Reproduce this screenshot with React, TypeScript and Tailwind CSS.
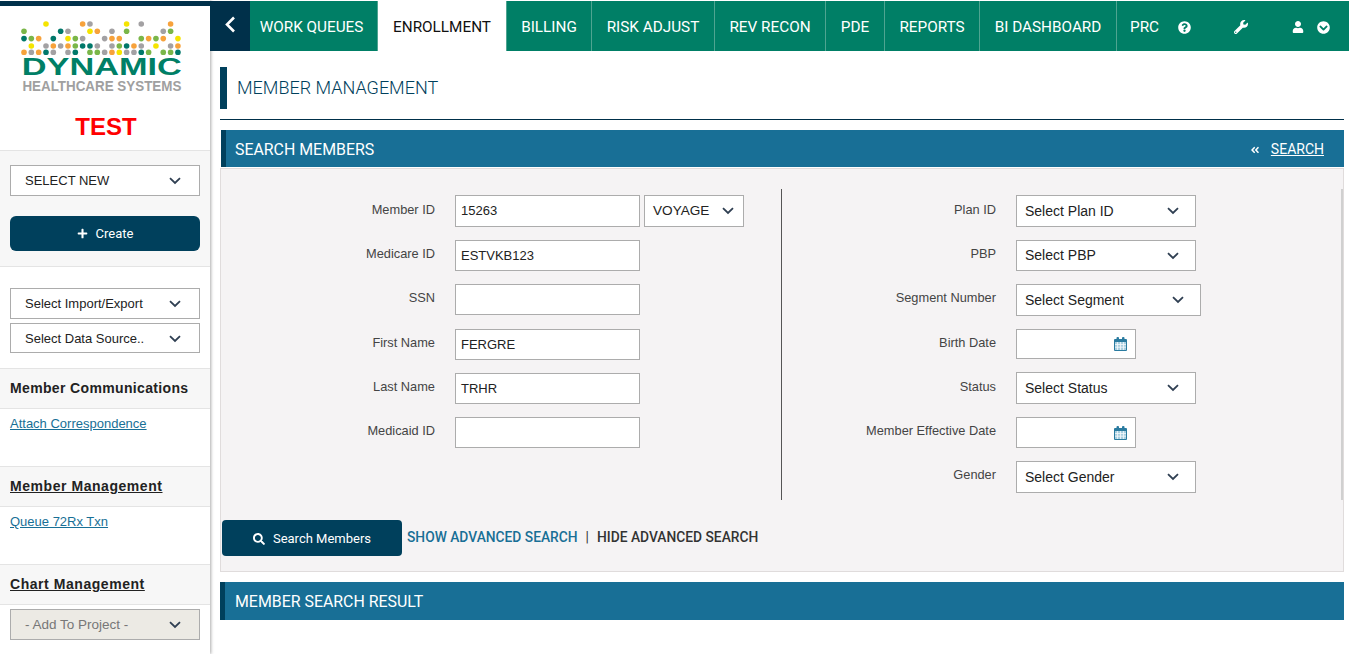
import { FaAngleDoubleLeft, FaChevronCircleDown, FaPlus, FaQuestionCircle, FaSearch, FaUser, FaWrench } from "react-icons/fa";

const D = "#00786a";
const L = "#7ab648";
const O = "#f7a23b";
const Y = "#f5e400";
const A = "#a3a1a3";

// [column, colour] per row of the logo's dot field
const dotRows: [number, string][][] = [
  [[3, Y], [8, O], [9, A], [14, Y], [16, A], [20, O]],
  [[0, L], [5, D], [6, A], [9, Y], [10, O], [12, A], [14, L], [19, A], [20, L]],
  [[0, D], [1, L], [2, O], [4, D], [6, Y], [7, L], [8, A], [11, A], [12, O], [13, O], [16, L], [17, O], [18, L], [19, O], [21, Y]],
  [[1, Y], [3, A], [4, O], [5, A], [6, O], [7, L], [8, D], [9, D], [10, A], [12, A], [13, L], [14, D], [15, O], [16, A], [18, Y], [20, A], [21, O]],
  [[0, O], [1, A], [2, O], [3, D], [4, A], [6, A], [7, D], [9, L], [10, L], [11, A], [12, O], [13, Y], [14, A], [15, A], [16, D], [17, L], [19, L], [20, L], [21, D]],
];
const dotY = [0, 7.3, 14.6, 22, 28.4];

const tabs = [
  { label: "WORK QUEUES", w: "w-[128px] pr-[4px]" },
  { label: "ENROLLMENT", w: "w-[129px]", active: true },
  { label: "BILLING", w: "w-[85px]" },
  { label: "RISK ADJUST", w: "w-[123px]" },
  { label: "REV RECON", w: "w-[111px]" },
  { label: "PDE", w: "w-[59px]" },
  { label: "REPORTS", w: "w-[95px]" },
  { label: "BI DASHBOARD", w: "w-[137px]" },
];

function Chevron() {
  return (
    <svg width="12" height="8" viewBox="0 0 12 8" fill="none" className="shrink-0">
      <path d="M1 1.2 6 6l5-4.8" stroke="#2f3f52" strokeWidth="1.8" />
    </svg>
  );
}

function CalendarIcon() {
  return (
    <svg width="13" height="14" viewBox="0 0 13 14">
      <rect x="0" y="2" width="13" height="12" rx="1" fill="#2a7ba0" />
      <rect x="2.5" y="0" width="2.5" height="4" rx="1" fill="#2a7ba0" />
      <rect x="8" y="0" width="2.5" height="4" rx="1" fill="#2a7ba0" />
      <rect x="1" y="5" width="11" height="8" fill="#a9cfe0" />
      <path d="M3.5 5v8M6.5 5v8M9.5 5v8M1 7.5h11M1 10.2h11" stroke="#f5f9fb" strokeWidth="0.8" />
    </svg>
  );
}

function Select({ label, className, muted }: { label: string; className: string; muted?: boolean }) {
  return (
    <div
      className={`flex items-center justify-between border border-[#acacac] pl-[14px] pr-[18px] ${muted ? "bg-[#eceae4] pt-px text-[13.5px] text-[#777]" : "bg-white text-[13px] text-[#222]"} ${className}`}
    >
      <span className="whitespace-nowrap">{label}</span>
      <Chevron />
    </div>
  );
}

function FormSelect({ label, className }: { label: string; className: string }) {
  return (
    <div className={`flex items-center justify-between border border-[#acacac] bg-white pl-2 pr-4 text-[14px] text-[#222] ${className}`}>
      <span className="whitespace-nowrap">{label}</span>
      <Chevron />
    </div>
  );
}

function TextBox({ value }: { value?: string }) {
  return (
    <div className="flex h-full w-[185px] items-center border border-[#acacac] bg-white px-[5px] text-[13px] text-[#222]">
      {value}
    </div>
  );
}

function DateBox({ height }: { height: string }) {
  return (
    <div className={`flex ${height} w-[120px] items-center justify-end border border-[#acacac] bg-white pr-[8px]`}>
      <CalendarIcon />
    </div>
  );
}

function LeftRow({ label, height, gap, pad, children }: { label: string; height: string; gap: string; pad: string; children: React.ReactNode }) {
  return (
    <div className={`flex ${height} ${gap}`}>
      <div className={`w-[214px] text-right text-[12.8px] text-[#444] ${pad}`}>{label}</div>
      <div className="ml-[20px] flex h-full gap-1">{children}</div>
    </div>
  );
}

function RightRow({ label, gap, pad, children }: { label: string; gap: string; pad: string; children: React.ReactNode }) {
  return (
    <div className={`flex ${gap}`}>
      <div className={`w-[214px] whitespace-nowrap text-right text-[12.8px] text-[#444] ${pad}`}>{label}</div>
      <div className="ml-[20px]">{children}</div>
    </div>
  );
}

function SectionBar({ title, titleClass, children }: { title: string; titleClass?: string; children?: React.ReactNode }) {
  return (
    <div className="flex items-center justify-between border-l-[5px] border-[#00405c] bg-[#186f96] pl-[9px] pr-5 pt-[2px] font-['Roboto',sans-serif] text-[15.9px] text-white">
      <span className={titleClass}>{title}</span>
      {children}
    </div>
  );
}

function SideHeading({ title, underline }: { title: string; underline?: boolean }) {
  return (
    <div className={`flex h-[41px] items-center border-y border-[#e4e4e4] bg-[#f7f7f7] pl-[10px] text-[14px] font-bold text-[#222] ${underline ? "tracking-[0.55px] underline" : "tracking-[0.35px]"}`}>
      {title}
    </div>
  );
}

export default function App() {
  return (
    <div className="flex h-[654px] w-[1366px] overflow-hidden bg-white font-['Liberation_Sans',sans-serif]">
      <aside className="flex w-[210px] shrink-0 flex-col shadow-[1px_0_3px_#aaa]">
        <div className="mt-px h-[5px] bg-[#00304a]" />
        <div className="flex h-[144px] flex-col items-center bg-white">
          <svg width="168" height="34" viewBox="0 0 168 34" className="mt-[15px] shrink-0">
            {dotRows.map((row, r) =>
              row.map(([c, color]) => (
                <circle key={`${r}-${c}`} cx={3 + c * 7.33} cy={3 + dotY[r]} r="2.8" fill={color} />
              ))
            )}
          </svg>
          <div className="mt-[4px] h-[17px] whitespace-nowrap text-[23.5px] font-bold leading-[17px] text-[#007f66] [transform:translateX(-3px)_scaleX(1.46)]">
            DYNAMIC
          </div>
          <div className="mt-[4px] h-[12px] whitespace-nowrap text-[15.4px] font-bold leading-[12px] text-[#a0a0a0] [transform:translateX(-3.5px)_scaleX(0.87)]">
            HEALTHCARE SYSTEMS
          </div>
          <div className="ml-[2px] mt-[21px] text-[24px] font-bold leading-[28px] text-[#ff0000]">TEST</div>
        </div>
        <div className="flex h-[117px] flex-col border-y border-[#e4e4e4] bg-[#f7f7f7] px-[10px] pt-[14px]">
          <Select label="SELECT NEW" className="h-[31px]" />
          <div className="mt-5 flex h-[35px] items-center justify-center gap-2 rounded-[6px] bg-[#00405c] font-['Roboto',sans-serif] text-[13px] text-white">
            <FaPlus className="text-[11px]" />
            Create
          </div>
        </div>
        <div className="flex h-[101px] flex-col gap-1 px-[10px] pt-[21px]">
          <Select label="Select Import/Export" className="h-[31px]" />
          <Select label="Select Data Source.." className="h-[30px] pt-px" />
        </div>
        <SideHeading title="Member Communications" />
        <div className="h-[57px] pl-[10px] pt-[5px] text-[13px] text-[#186f96] underline">Attach Correspondence</div>
        <SideHeading title="Member Management" underline />
        <div className="h-[57px] pl-[10px] pt-[5px] text-[13px] text-[#186f96] underline">Queue 72Rx Txn</div>
        <SideHeading title="Chart Management" underline />
        <div className="px-[10px] pt-[4px]">
          <Select label="- Add To Project -" className="h-[31px]" muted />
        </div>
      </aside>

      <div className="w-[1139px] shrink-0">
        <nav className="mt-px flex h-[50px] w-full items-stretch bg-[#007f66] font-['Roboto',sans-serif] text-[15.3px] text-white">
          <div className="flex w-[40px] items-center justify-center bg-[#00304a] pb-[2px]">
            <svg width="12" height="18" viewBox="0 0 12 18" fill="none">
              <path d="M10 1.5 3 8.5l7 7" stroke="white" strokeWidth="2.6" />
            </svg>
          </div>
          {tabs.map((t) => (
            <div
              key={t.label}
              className={`flex ${t.w} items-center justify-center border-r border-[#4fa491] pt-[2px] ${t.active ? "bg-white text-[#111]" : ""}`}
            >
              {t.label}
            </div>
          ))}
          <div className="flex w-[42px] items-center overflow-hidden whitespace-nowrap pl-[13px] pt-[2px]">PRC</div>
          <div className="flex w-[32px] items-center justify-end pt-[2px]">
            <FaQuestionCircle className="text-[13px]" />
          </div>
          <div className="flex w-[57px] items-center justify-end pt-[2px]">
            <FaWrench className="text-[14px]" />
          </div>
          <div className="flex w-[56px] items-center justify-end pt-[2px]">
            <FaUser className="text-[12px]" />
          </div>
          <div className="ml-[13px] flex items-center pt-[2px]">
            <FaChevronCircleDown className="text-[13px]" />
          </div>
        </nav>

        <main className="ml-[10px] w-[1124px]">
          <div className="mt-4 flex h-[42px] items-center border-l-[7px] border-[#00405c] pb-[2px] pl-[10px] font-['Roboto',sans-serif] text-[18px] font-light text-[#00405c]">
            MEMBER MANAGEMENT
          </div>
          <div className="mt-[10px] h-px bg-[#00304a]" />
          <div className="ml-px mt-[10px]">
            <div className="h-[37px] [&>div]:h-full">
              <SectionBar title="SEARCH MEMBERS">
                <span className="flex items-center gap-[11px] text-[14px]">
                  <FaAngleDoubleLeft className="text-[10px]" />
                  <span className="underline">SEARCH</span>
                </span>
              </SectionBar>
            </div>
          </div>

          <section className="mt-px h-[404px] border border-[#e0dcdc] bg-[#f5f3f4]">
            <div className="flex pt-[20px]">
              <div className="h-[311px] w-[561px] border-r border-[#555] pt-[6px]">
                <LeftRow label="Member ID" height="h-[32px]" gap="mb-[13px]" pad="pt-[5px]">
                  <TextBox value="15263" />
                  <FormSelect label="VOYAGE" className="w-[100px] !pr-[9px] !text-[13.6px]" />
                </LeftRow>
                <LeftRow label="Medicare ID" height="h-[31px]" gap="mb-[13px]" pad="pt-[4px]">
                  <TextBox value="ESTVKB123" />
                </LeftRow>
                <LeftRow label="SSN" height="h-[31px]" gap="mb-[14px]" pad="pt-[4px]">
                  <TextBox />
                </LeftRow>
                <LeftRow label="First Name" height="h-[31px]" gap="mb-[13px]" pad="pt-[4px]">
                  <TextBox value="FERGRE" />
                </LeftRow>
                <LeftRow label="Last Name" height="h-[31px]" gap="mb-[13px]" pad="pt-[4px]">
                  <TextBox value="TRHR" />
                </LeftRow>
                <LeftRow label="Medicaid ID" height="h-[31px]" gap="" pad="pt-[4px]">
                  <TextBox />
                </LeftRow>
              </div>
              <div className="h-[311px] flex-1 border-r-2 border-[#d0d0d0] pt-[6px]">
                <RightRow label="Plan ID" gap="mb-[13px]" pad="pt-[5px]"><FormSelect label="Select Plan ID" className="h-[32px] w-[180px]" /></RightRow>
                <RightRow label="PBP" gap="mb-[13px]" pad="pt-[4px]"><FormSelect label="Select PBP" className="h-[31px] w-[180px]" /></RightRow>
                <RightRow label="Segment Number" gap="mb-[13px]" pad="pt-[4px]"><FormSelect label="Select Segment" className="h-[32px] w-[185px]" /></RightRow>
                <RightRow label="Birth Date" gap="mb-[13px]" pad="pt-[4px]"><DateBox height="h-[30px]" /></RightRow>
                <RightRow label="Status" gap="mb-[13px]" pad="pt-[5px]"><FormSelect label="Select Status" className="h-[32px] w-[180px]" /></RightRow>
                <RightRow label="Member Effective Date" gap="mb-[13px]" pad="pt-[4px]"><DateBox height="h-[31px]" /></RightRow>
                <RightRow label="Gender" gap="" pad="pt-[4px]"><FormSelect label="Select Gender" className="h-[32px] w-[180px]" /></RightRow>
              </div>
            </div>
            <div className="ml-px mt-[20px] flex items-center font-['Roboto',sans-serif]">
              <div className="flex h-[36px] w-[180px] items-center justify-center gap-2 rounded-[4px] bg-[#00405c] pt-px text-[13px] text-white">
                <FaSearch className="text-[12px]" />
                Search Members
              </div>
              <span className="mb-[2px] ml-[5px] text-[13.8px] font-medium text-[#186f96]">SHOW ADVANCED SEARCH</span>
              <span className="mx-[8px] mb-[2px] text-[13.8px] text-[#333]">|</span>
              <span className="mb-[2px] text-[13.8px] font-medium text-[#333]">HIDE ADVANCED SEARCH</span>
            </div>
          </section>

          <div className="mt-[10px] h-[38px] [&>div]:h-full">
            <SectionBar title="MEMBER SEARCH RESULT" titleClass="ml-px" />
          </div>
        </main>
      </div>
    </div>
  );
}
